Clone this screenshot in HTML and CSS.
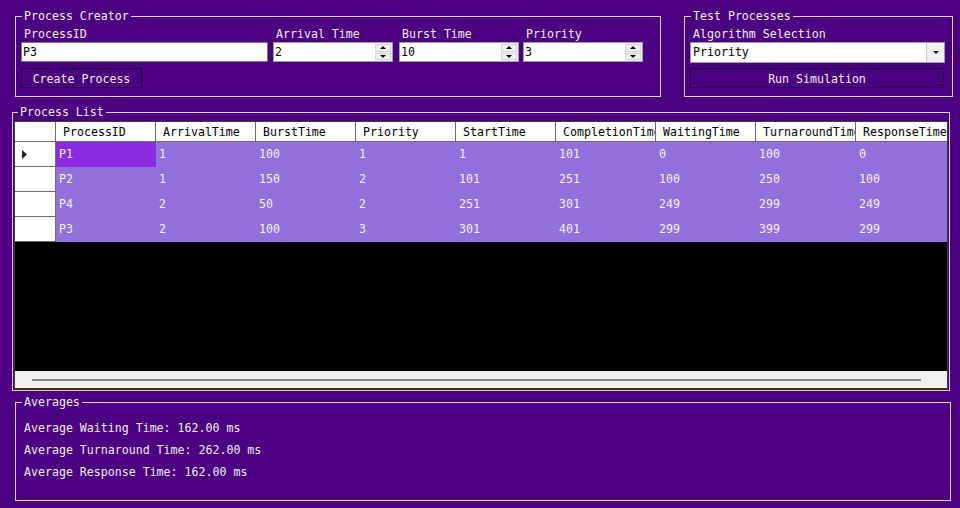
FILE: index.html
```html
<!DOCTYPE html>
<html lang="en">

<head>
    <meta charset="UTF-8">
    <title>CPU Scheduler</title>
    <link rel="stylesheet" href="styles.css">
</head>

<body>

    <div class="top_row">
        <fieldset class="group creator">
            <legend>Process Creator</legend>
            <div class="fields">
                <div class="field field_id">
                    <label>ProcessID</label>
                    <div class="textbox">P3</div>
                </div>
                <div class="field field_num f_arrival">
                    <label>Arrival Time</label>
                    <div class="numeric">
                        <span class="num_value">2</span>
                        <div class="spin">
                            <div class="spin_btn"><span class="arrow_up"></span></div>
                            <div class="spin_btn"><span class="arrow_down"></span></div>
                        </div>
                    </div>
                </div>
                <div class="field field_num f_burst">
                    <label>Burst Time</label>
                    <div class="numeric">
                        <span class="num_value">10</span>
                        <div class="spin">
                            <div class="spin_btn"><span class="arrow_up"></span></div>
                            <div class="spin_btn"><span class="arrow_down"></span></div>
                        </div>
                    </div>
                </div>
                <div class="field field_num f_priority">
                    <label>Priority</label>
                    <div class="numeric">
                        <span class="num_value">3</span>
                        <div class="spin">
                            <div class="spin_btn"><span class="arrow_up"></span></div>
                            <div class="spin_btn"><span class="arrow_down"></span></div>
                        </div>
                    </div>
                </div>
            </div>
            <button class="btn btn_create">Create Process</button>
        </fieldset>

        <fieldset class="group tester">
            <legend>Test Processes</legend>
            <label class="algo_label">Algorithm Selection</label>
            <div class="combo">
                <span class="combo_value">Priority</span>
                <div class="combo_btn"><span class="arrow_down"></span></div>
            </div>
            <button class="btn btn_run">Run Simulation</button>
        </fieldset>
    </div>

    <fieldset class="group list">
        <legend>Process List</legend>
        <div class="grid">
            <div class="grid_head">
                <div class="row_head"></div>
                <div class="col_head">ProcessID</div>
                <div class="col_head">ArrivalTime</div>
                <div class="col_head">BurstTime</div>
                <div class="col_head">Priority</div>
                <div class="col_head">StartTime</div>
                <div class="col_head">CompletionTime</div>
                <div class="col_head">WaitingTime</div>
                <div class="col_head">TurnaroundTime</div>
                <div class="col_head">ResponseTime</div>
            </div>
            <div class="grid_row">
                <div class="row_head current">
                    <svg width="5" height="9" viewBox="0 0 5 9"><path d="M0 0L5 4.5L0 9Z" fill="#222"/></svg>
                </div>
                <div class="cell selected">P1</div>
                <div class="cell">1</div>
                <div class="cell">100</div>
                <div class="cell">1</div>
                <div class="cell">1</div>
                <div class="cell">101</div>
                <div class="cell">0</div>
                <div class="cell">100</div>
                <div class="cell">0</div>
            </div>
            <div class="grid_row">
                <div class="row_head"></div>
                <div class="cell">P2</div>
                <div class="cell">1</div>
                <div class="cell">150</div>
                <div class="cell">2</div>
                <div class="cell">101</div>
                <div class="cell">251</div>
                <div class="cell">100</div>
                <div class="cell">250</div>
                <div class="cell">100</div>
            </div>
            <div class="grid_row">
                <div class="row_head"></div>
                <div class="cell">P4</div>
                <div class="cell">2</div>
                <div class="cell">50</div>
                <div class="cell">2</div>
                <div class="cell">251</div>
                <div class="cell">301</div>
                <div class="cell">249</div>
                <div class="cell">299</div>
                <div class="cell">249</div>
            </div>
            <div class="grid_row">
                <div class="row_head"></div>
                <div class="cell">P3</div>
                <div class="cell">2</div>
                <div class="cell">100</div>
                <div class="cell">3</div>
                <div class="cell">301</div>
                <div class="cell">401</div>
                <div class="cell">299</div>
                <div class="cell">399</div>
                <div class="cell">299</div>
            </div>
            <div class="grid_empty"></div>
            <div class="hscroll">
                <div class="hscroll_thumb"></div>
            </div>
        </div>
    </fieldset>

    <fieldset class="group averages">
        <legend>Averages</legend>
        <div class="avg_line">Average Waiting Time: 162.00 ms</div>
        <div class="avg_line">Average Turnaround Time: 262.00 ms</div>
        <div class="avg_line">Average Response Time: 162.00 ms</div>
    </fieldset>

</body>

</html>
```

FILE: styles.css
```css
body {
    margin: 0;
    padding-top: 9px;
    height: 508px;
    box-sizing: border-box;
    overflow: hidden;
    background: #4b0082;
    color: #f0f0f0;
    font-family: 'DejaVu Sans Mono', monospace;
    font-size: 11.6px;
    line-height: 14px;
}

.group {
    margin: 0;
    min-width: 0;
    border: 1px solid #d8d4e0;
    box-sizing: border-box;
}

.group legend {
    padding: 0 2px;
    margin-left: 1px;
    line-height: 14px;
}

/* top row */

.top_row {
    display: flex;
    margin-left: 15px;
}

.creator {
    width: 646px;
    padding: 3px 5px 8px 5px;
}

.tester {
    width: 269px;
    margin-left: 23px;
    padding: 3px 7px 8px 5px;
}

.fields {
    display: flex;
}

.field {
    display: flex;
    flex-direction: column;
}

.field label,
.algo_label {
    display: block;
    height: 14px;
    padding-left: 3px;
    padding-top: 1px;
    margin-bottom: 1px;
}

.field_id {
    width: 247px;
}

.field_num {
    width: 120px;
}

.f_arrival {
    margin-left: 5px;
}

.f_burst {
    margin-left: 6px;
}

.f_priority {
    margin-left: 4px;
}

.textbox {
    height: 20px;
    box-sizing: border-box;
    background: #fff;
    border: 1px solid #7a7a7a;
    color: #000;
    padding-left: 1px;
    line-height: 18px;
}

.numeric {
    height: 20px;
    box-sizing: border-box;
    background: #fff;
    border: 1px solid #a0a0a0;
    color: #000;
    display: flex;
    justify-content: space-between;
    line-height: 18px;
}

.num_value {
    padding-left: 1px;
}

.spin {
    width: 16px;
    display: flex;
    flex-direction: column;
    background: #f0f0f0;
    padding: 1px 1px 1px 0;
    gap: 1px;
}

.spin_btn {
    flex: 1;
    background: #f0f0f0;
    border: 1px solid #d6d6d6;
    display: flex;
    justify-content: center;
    align-items: center;
}

.arrow_up {
    width: 0;
    height: 0;
    border-left: 3px solid transparent;
    border-right: 3px solid transparent;
    border-bottom: 3px solid #000;
}

.arrow_down {
    width: 0;
    height: 0;
    border-left: 3px solid transparent;
    border-right: 3px solid transparent;
    border-top: 3px solid #000;
}

.btn {
    display: block;
    height: 20px;
    margin-top: 6px;
    background: #4b0082;
    border: 1px solid #1c0030;
    color: #f0f0f0;
    font-family: inherit;
    font-size: inherit;
    line-height: 18px;
    padding: 1px 0 0 0;
}

.btn_create {
    width: 121px;
}

.btn_run {
    width: 254px;
    margin-top: 5px;
}

.combo {
    height: 21px;
    width: 255px;
    box-sizing: border-box;
    background: #fff;
    border: 1px solid #a0a0a0;
    color: #000;
    display: flex;
    justify-content: space-between;
    line-height: 18px;
}

.combo_value {
    padding-left: 2px;
}

.combo_btn {
    width: 17px;
    background: #f0f0f0;
    border-left: 1px solid #c8c8c8;
    display: flex;
    justify-content: center;
    align-items: center;
}

/* process list */

.list {
    width: 938px;
    margin: 8px 0 0 12px;
    padding: 2px 1px 1px 1px;
}

.list legend {
    margin-left: 4px;
}

.grid {
    width: 934px;
    height: 268px;
    box-sizing: border-box;
    border: 1px solid #3c3c3c;
    background: #000;
    overflow: hidden;
    display: flex;
    flex-direction: column;
}

.grid_head,
.grid_row {
    display: flex;
    flex-shrink: 0;
}

.grid_head {
    height: 20px;
    background: #fff;
    color: #000;
}

.grid_row {
    height: 25px;
    background: #9370db;
}

.row_head {
    width: 41px;
    flex-shrink: 0;
    box-sizing: border-box;
    background: #fff;
    border-right: 1px solid #6b6b6b;
    border-bottom: 1px solid #6b6b6b;
}

.current {
    display: flex;
    align-items: center;
    padding-left: 7px;
    padding-top: 1px;
}

.col_head {
    width: 100px;
    flex-shrink: 0;
    box-sizing: border-box;
    padding-left: 7px;
    padding-top: 1px;
    border-right: 1px solid #6b6b6b;
    border-bottom: 1px solid #6b6b6b;
    line-height: 18px;
    white-space: nowrap;
    overflow: hidden;
}

.cell {
    width: 100px;
    flex-shrink: 0;
    box-sizing: border-box;
    padding-left: 3px;
    line-height: 25px;
    color: #f4f0fa;
}

.cell.selected {
    background: #8a2be2;
}

.grid_empty {
    flex: 1;
}

.hscroll {
    height: 17px;
    flex-shrink: 0;
    background: #f0f0f0;
    display: flex;
    align-items: center;
    padding-left: 17px;
}

.hscroll_thumb {
    width: 889px;
    height: 2px;
    margin-top: 1px;
    background: #868686;
}

/* averages */

.averages {
    width: 936px;
    height: 106px;
    margin: 4px 0 0 15px;
    padding: 8px 8px 0 8px;
}

.averages legend {
    margin-left: -2px;
}

.avg_line {
    line-height: 22px;
}
```
